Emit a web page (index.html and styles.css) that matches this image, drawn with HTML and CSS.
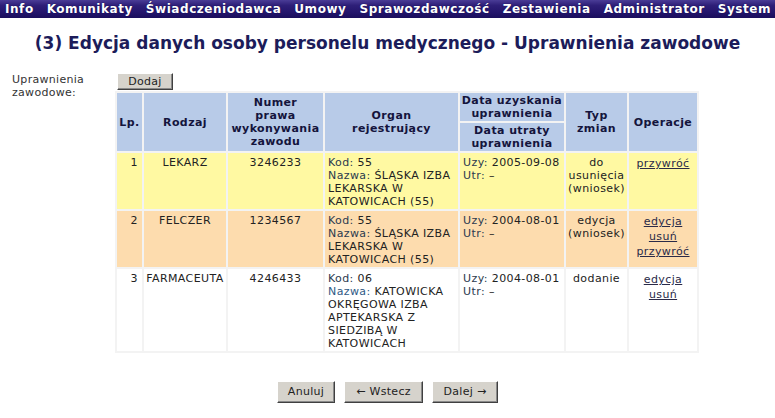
FILE: index.html
```html
<!DOCTYPE html>
<html lang="pl">
<head>
<meta charset="utf-8">
<title>Uprawnienia zawodowe</title>
<link rel="stylesheet" href="styles.css">
</head>
<body>
<nav class="menu">
  <a class="menu-item">Info</a>
  <a class="menu-item">Komunikaty</a>
  <a class="menu-item">Świadczeniodawca</a>
  <a class="menu-item">Umowy</a>
  <a class="menu-item">Sprawozdawczość</a>
  <a class="menu-item">Zestawienia</a>
  <a class="menu-item">Administrator</a>
  <a class="menu-item">System</a>
</nav>
<h1 class="title">(3) Edycja danych osoby personelu medycznego - Uprawnienia zawodowe</h1>
<div class="form-row">
  <div class="form-label">Uprawnienia<br>zawodowe:</div>
  <div class="form-content">
    <button class="btn btn-small">Dodaj</button>
    <table class="grid">
      <colgroup>
        <col class="c-lp"><col class="c-rodzaj"><col class="c-numer"><col class="c-organ"><col class="c-data"><col class="c-typ"><col class="c-op">
      </colgroup>
      <thead>
        <tr>
          <th rowspan="2">Lp.</th>
          <th rowspan="2">Rodzaj</th>
          <th rowspan="2">Numer<br>prawa<br>wykonywania<br>zawodu</th>
          <th rowspan="2">Organ<br>rejestrujący</th>
          <th class="th-sub">Data uzyskania<br>uprawnienia</th>
          <th rowspan="2">Typ<br>zmian</th>
          <th rowspan="2">Operacje</th>
        </tr>
        <tr>
          <th class="th-sub">Data utraty<br>uprawnienia</th>
        </tr>
      </thead>
      <tbody>
        <tr class="row-del">
          <td class="num">1</td>
          <td class="center">LEKARZ</td>
          <td class="center">3246233</td>
          <td class="left"><span class="lbl">Kod:</span> 55<br><span class="lbl">Nazwa:</span> ŚLĄSKA IZBA LEKARSKA W KATOWICACH (55)</td>
          <td class="left"><span class="lbl">Uzy:</span> 2005-09-08<br><span class="lbl">Utr:</span> –</td>
          <td class="center">do usunięcia (wniosek)</td>
          <td class="center ops"><a href="#">przywróć</a></td>
        </tr>
        <tr class="row-edit">
          <td class="num">2</td>
          <td class="center">FELCZER</td>
          <td class="center">1234567</td>
          <td class="left"><span class="lbl">Kod:</span> 55<br><span class="lbl">Nazwa:</span> ŚLĄSKA IZBA LEKARSKA W KATOWICACH (55)</td>
          <td class="left"><span class="lbl">Uzy:</span> 2004-08-01<br><span class="lbl">Utr:</span> –</td>
          <td class="center">edycja (wniosek)</td>
          <td class="center ops"><a href="#">edycja</a><a href="#">usuń</a><a href="#">przywróć</a></td>
        </tr>
        <tr class="row-new">
          <td class="num">3</td>
          <td class="center">FARMACEUTA</td>
          <td class="center">4246433</td>
          <td class="left"><span class="lbl">Kod:</span> 06<br><span class="lbl lbl-blue">Nazwa:</span> KATOWICKA OKRĘGOWA IZBA APTEKARSKA Z SIEDZIBĄ W KATOWICACH</td>
          <td class="left"><span class="lbl">Uzy:</span> 2004-08-01<br><span class="lbl">Utr:</span> –</td>
          <td class="center">dodanie</td>
          <td class="center ops"><a href="#">edycja</a><a href="#">usuń</a></td>
        </tr>
      </tbody>
    </table>
  </div>
</div>
<div class="actions">
  <button class="btn btn-big btn-anuluj">Anuluj</button>
  <button class="btn btn-big btn-wstecz">← Wstecz</button>
  <button class="btn btn-big btn-dalej">Dalej →</button>
</div>
</body>
</html>
```
FILE: styles.css
```css
html, body {
  margin: 0;
  padding: 0;
  background: #ffffff;
}
body {
  font-family: "DejaVu Sans", Verdana, sans-serif;
  font-size: 11px;
  color: #222;
  width: 775px;
}
.menu {
  display: flex;
  gap: 13px;
  height: 18px;
  padding-left: 5px;
  align-items: center;
  background: linear-gradient(to bottom, #4a3c96 0%, #2e1f78 30%, #23156b 70%, #1a0e5c 100%);
  white-space: nowrap;
  overflow: hidden;
}
.menu-item {
  color: #ffffff;
  font-weight: bold;
  font-size: 12px;
  line-height: 18px;
  letter-spacing: 0.55px;
  text-shadow: 0 0 1px #000040;
}
.title {
  margin: 14px 0 0 0;
  text-align: center;
  font-size: 17px;
  line-height: 22px;
  font-weight: bold;
  color: #1c1c5a;
}
.form-row {
  display: flex;
  margin-top: 19px;
}
.form-label {
  width: 105px;
  padding-left: 12px;
  line-height: 13px;
  color: #333;
  letter-spacing: 0.3px;
}
.form-content {
  display: flex;
  flex-direction: column;
  align-items: flex-start;
}
.btn {
  font-family: "DejaVu Sans", Verdana, sans-serif;
  font-size: 11px;
  letter-spacing: 0.3px;
  color: #222;
  background: #d6d3cc;
  border: 1px solid;
  border-color: #ffffff #404040 #404040 #ffffff;
  box-shadow: inset -1px -1px 0 #8a8a8a;
  padding: 0;
  margin: 0;
}
.btn-small {
  width: 56px;
  height: 17px;
  line-height: 14px;
}
.grid {
  margin-top: 1px;
  margin-left: -2px;
  border-collapse: separate;
  border-spacing: 2px;
  table-layout: fixed;
  width: 584px;
  background: #f3f3f3;
}
.c-lp { width: 25px; }
.c-rodzaj { width: 82px; }
.c-numer { width: 95px; }
.c-organ { width: 133px; }
.c-data { width: 104px; }
.c-typ { width: 61px; }
.c-op { width: 68px; }
.grid th {
  background: #b8cbe8;
  color: #14143c;
  font-weight: bold;
  line-height: 13px;
  letter-spacing: 0.4px;
  padding: 3px 0;
  text-align: center;
  vertical-align: middle;
}
.grid th.th-sub {
  padding: 1px 0;
}
.grid td {
  line-height: 13px;
  letter-spacing: 0.4px;
  padding: 3px 3px 1px 3px;
  vertical-align: top;
  color: #222;
}
.row-del td { background: #fff9a2; }
.row-edit td { background: #fddcae; }
.row-new td { background: #ffffff; }
.grid td.num {
  text-align: right;
  padding-right: 4px;
}
.grid td.center {
  text-align: center;
  padding-left: 0;
  padding-right: 0;
}
.grid td.left {
  text-align: left;
}
.lbl { color: #2b3a4e; }
.lbl-blue { color: #2f5a86; }
.ops a {
  display: block;
  color: #2a2a48;
  text-decoration: underline;
  line-height: 15px;
}
.actions {
  display: flex;
  justify-content: center;
  gap: 9px;
  margin-top: 28px;
}
.btn-big {
  height: 22px;
  line-height: 18px;
}
.btn-anuluj { width: 58px; }
.btn-wstecz { width: 79px; }
.btn-dalej { width: 66px; }
```
